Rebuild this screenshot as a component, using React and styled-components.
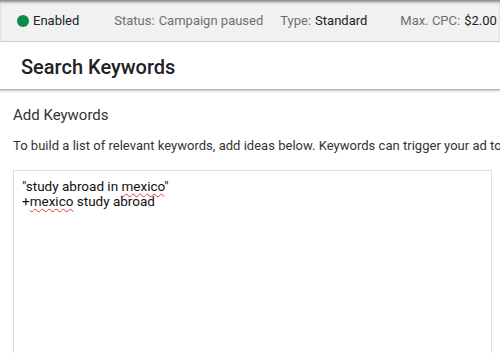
import React from "react";
import styled, { createGlobalStyle } from "styled-components";

const Global = createGlobalStyle`
  html, body { margin: 0; padding: 0; background: #fff; overflow: hidden; }
  body { font-family: Roboto, "Liberation Sans", Arial, sans-serif; }
  * { box-sizing: border-box; }
`;

const Page = styled.div`
  width: 500px;
  height: 353px;
  overflow: hidden;
  display: flex;
  flex-direction: column;
`;

const TopBar = styled.div`
  height: 42px;
  flex: none;
  display: flex;
  align-items: center;
  padding-left: 17px;
  background: #f1f1f1;
  border-bottom: 1px solid #d4d4d4;
  box-shadow: inset 0 3px 3px -1px rgba(0, 0, 0, 0.45);
  font-size: 13px;
  white-space: nowrap;
`;

const Item = styled.div`
  display: flex;
  align-items: center;
  margin-left: ${(p) => p.$offset || 0}px;
  color: #5f6368;
`;

const Dot = styled.span`
  width: 12px;
  height: 12px;
  border-radius: 50%;
  background: #0b8a4a;
  margin-right: 4px;
`;

const Value = styled.span`
  color: ${(p) => (p.$muted ? "#6f6f6f" : "#202124")};
  margin-left: 4px;
`;

const Strong = styled.span`
  color: #202124;
`;

const Label = styled.span`
  color: #6f6f6f;
`;

const Header = styled.div`
  height: 48px;
  flex: none;
  display: flex;
  align-items: center;
  padding-left: 21px;
  background: #fff;
  border-bottom: 1px solid #b5b5b5;
  box-shadow: 0 1px 2px rgba(0, 0, 0, 0.25);
  position: relative;
  z-index: 1;
`;

const Title = styled.h1`
  margin: 0;
  font-size: 20px;
  font-weight: 500;
  color: #202124;
  padding-top: 2px;
`;

const Body = styled.div`
  flex: 1;
  padding: 16px 8px 0 13px;
  display: flex;
  flex-direction: column;
`;

const SectionTitle = styled.h2`
  margin: 0;
  font-size: 15px;
  font-weight: 400;
  color: #333;
  line-height: 18px;
`;

const Description = styled.p`
  margin: 14px 0 0;
  font-size: 13px;
  line-height: 16px;
  color: #333;
  white-space: nowrap;
  letter-spacing: 0.02px;
`;

const Box = styled.div`
  margin-top: 16px;
  flex: 1;
  border: 1px solid #dcdcdc;
  border-bottom: none;
  padding: 8px 8px;
  font-size: 13.5px;
  line-height: 15px;
  color: #111;
`;

const Misspelled = styled.span`
  text-decoration: underline wavy #e53935;
  text-decoration-thickness: 1px;
  text-underline-offset: 2px;
`;

export default function App() {
  return (
    <Page>
      <Global />
      <TopBar>
        <Item>
          <Dot />
          <Strong>Enabled</Strong>
        </Item>
        <Item $offset={35}>
          <Label>Status:</Label>
          <Value $muted>Campaign paused</Value>
        </Item>
        <Item $offset={17}>
          <Label>Type:</Label>
          <Value>Standard</Value>
        </Item>
        <Item $offset={33}>
          <Label>Max. CPC:</Label>
          <Value>$2.00</Value>
        </Item>
      </TopBar>
      <Header>
        <Title>Search Keywords</Title>
      </Header>
      <Body>
        <SectionTitle>Add Keywords</SectionTitle>
        <Description>
          To build a list of relevant keywords, add ideas below. Keywords can trigger your ad to show when people search.
        </Description>
        <Box>
          <div>
            "study abroad in <Misspelled>mexico</Misspelled>"
          </div>
          <div>
            +<Misspelled>mexico</Misspelled> study abroad
          </div>
        </Box>
      </Body>
    </Page>
  );
}
